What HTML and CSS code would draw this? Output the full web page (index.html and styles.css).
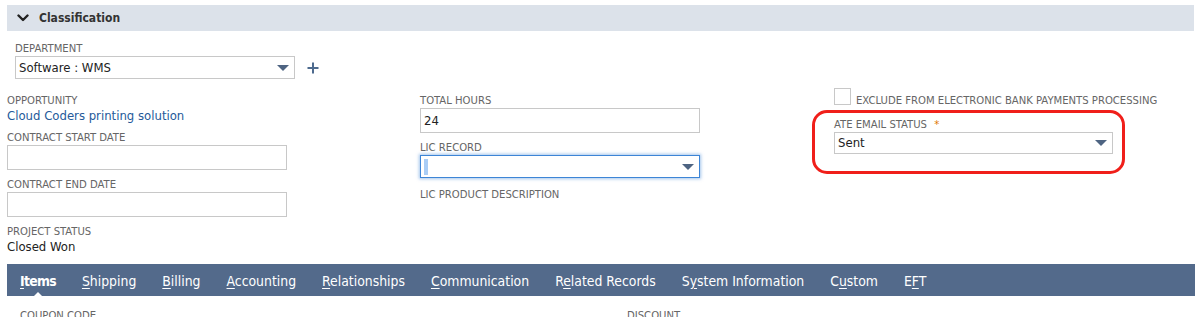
FILE: index.html
```html
<!DOCTYPE html>
<html lang="en">
<head>
<meta charset="utf-8">
<title>Classification</title>
<link rel="stylesheet" href="styles.css">
</head>
<body>
<div class="page">
  <div class="section-head">
    <svg class="chev" width="12" height="8" viewBox="0 0 12 8"><polyline points="1.5,1.5 6,6 10.5,1.5" fill="none" stroke="#222" stroke-width="2.4" stroke-linecap="round" stroke-linejoin="round"/></svg>
    <span>Classification</span>
  </div>

  <div class="dept">
    <span class="lbl">Department</span>
    <div class="dept-ctrl">
      <div class="select w280 h23"><span class="val">Software : WMS</span><span class="arrow"></span></div>
      <svg class="plus" width="12" height="12" viewBox="0 0 12 12"><path d="M6 0.5V11.5M0.5 6H11.5" stroke="#4d6a8e" stroke-width="2"/></svg>
    </div>
  </div>

  <div class="cols">
    <div class="col col1">
      <span class="lbl">Opportunity</span>
      <a class="val link">Cloud Coders printing solution</a>
      <span class="lbl mt7">Contract Start Date</span>
      <div class="input w280"></div>
      <span class="lbl mt8">Contract End Date</span>
      <div class="input w280"></div>
      <span class="lbl mt8">Project Status</span>
      <span class="val">Closed Won</span>
    </div>
    <div class="col col2">
      <span class="lbl">Total Hours</span>
      <div class="input w280"><span class="val">24</span></div>
      <span class="lbl mt8">LIC Record</span>
      <div class="select focused w280 h23"><span class="caret"></span><span class="arrow"></span></div>
      <span class="lbl mt10">LIC Product Description</span>
    </div>
    <div class="col col3">
      <div class="check-row">
        <span class="checkbox"></span>
        <span class="lbl check-lbl">Exclude from electronic bank payments processing</span>
      </div>
      <span class="lbl mt10">ATE Email Status <span class="req">*</span></span>
      <div class="select w279 h22"><span class="val">Sent</span><span class="arrow"></span></div>
      <div class="highlight"></div>
    </div>
  </div>

  <nav class="tabs">
    <span class="tab active"><u>I</u>tems</span>
    <span class="tab"><u>S</u>hipping</span>
    <span class="tab"><u>B</u>illing</span>
    <span class="tab"><u>A</u>ccounting</span>
    <span class="tab"><u>R</u>elationships</span>
    <span class="tab"><u>C</u>ommunication</span>
    <span class="tab">R<u>e</u>lated Records</span>
    <span class="tab">S<u>y</u>stem Information</span>
    <span class="tab">C<u>u</u>stom</span>
    <span class="tab">E<u>F</u>T</span>
  </nav>

  <div class="sub">
    <span class="lbl">Coupon Code</span>
    <span class="lbl">Discount</span>
  </div>
</div>
</body>
</html>
```

FILE: styles.css
```css
* { box-sizing: border-box; }

body {
  margin: 0;
  background: #fff;
  color: #333;
  font-family: "DejaVu Sans Condensed", "DejaVu Sans", sans-serif;
  font-stretch: condensed;
  overflow: hidden;
}

.page {
  width: 1195px;
  padding-left: 7px;
}

.section-head {
  margin-top: 5px;
  margin-right: 1px;
  height: 26px;
  background: #dce2ea;
  display: flex;
  align-items: center;
  gap: 10px;
  padding-left: 10px;
  font-size: 12px;
  font-weight: bold;
  color: #333;
}

.lbl {
  display: block;
  font-size: 11.2px;
  line-height: 14px;
  color: #666;
  text-transform: uppercase;
  white-space: nowrap;
}

.val {
  display: block;
  font-size: 13px;
  line-height: 16px;
  color: #222;
  white-space: nowrap;
}

.link { color: #255a9a; }

.mt7 { margin-top: 7px; }
.mt8 { margin-top: 8px; }
.mt10 { margin-top: 10px; }

.w280 { width: 280px; }
.w279 { width: 279px; }
.h22 { height: 22px; }
.h23 { height: 23px; }

.dept {
  margin-top: 11px;
  padding-left: 8px;
}

.dept-ctrl {
  display: flex;
  align-items: center;
  gap: 12px;
}

.select {
  display: flex;
  align-items: center;
  justify-content: space-between;
  border: 1px solid #c8c8c8;
  padding: 0 5px 0 3px;
  background: #fff;
}

.select .val { line-height: 16px; }

.arrow {
  width: 0;
  height: 0;
  border-left: 6px solid transparent;
  border-right: 6px solid transparent;
  border-top: 6px solid #4e6482;
  margin-left: auto;
}

.select.focused {
  border-color: #3d85d6;
  box-shadow: 0 0 3px 1px rgba(90, 150, 220, 0.55);
}

.caret {
  width: 4px;
  height: 16px;
  background: #a9cdf6;
}

.input {
  height: 25px;
  border: 1px solid #c8c8c8;
  padding: 0 3px;
  display: flex;
  align-items: center;
}

.cols {
  margin-top: 9px;
  display: grid;
  grid-template-columns: 413px 414px 1fr;
}

.col1, .col2 { padding-top: 6px; }

.col3 { position: relative; }

.check-row {
  display: flex;
  align-items: flex-start;
}

.checkbox {
  width: 17px;
  height: 17px;
  border: 1px solid #c8c8c8;
  background: #fff;
}

.check-lbl {
  margin-left: 5px;
  margin-top: 6px;
}

.req {
  color: #e07800;
  margin-left: 4px;
}

.highlight {
  position: absolute;
  left: -22px;
  top: 22px;
  width: 313px;
  height: 64px;
  border: 3px solid #f01f1a;
  border-radius: 15px;
  pointer-events: none;
}

.tabs {
  margin-top: 9px;
  height: 32px;
  background: #536a8b;
  display: flex;
  align-items: center;
}

.tab {
  position: relative;
  padding: 2px 13px 0;
  font-size: 13.85px;
  line-height: 30px;
  color: #fff;
  white-space: nowrap;
}

.tab u { text-underline-offset: 2px; }

.tab.active {
  font-weight: bold;
  letter-spacing: -0.7px;
}

.tab.active::after {
  content: "";
  position: absolute;
  left: 50%;
  bottom: -1px;
  margin-left: -5px;
  border-left: 5px solid transparent;
  border-right: 5px solid transparent;
  border-bottom: 5px solid #fff;
}

.sub {
  margin-top: 13px;
  display: grid;
  grid-template-columns: 607px 1fr;
  padding-left: 13px;
}
```
